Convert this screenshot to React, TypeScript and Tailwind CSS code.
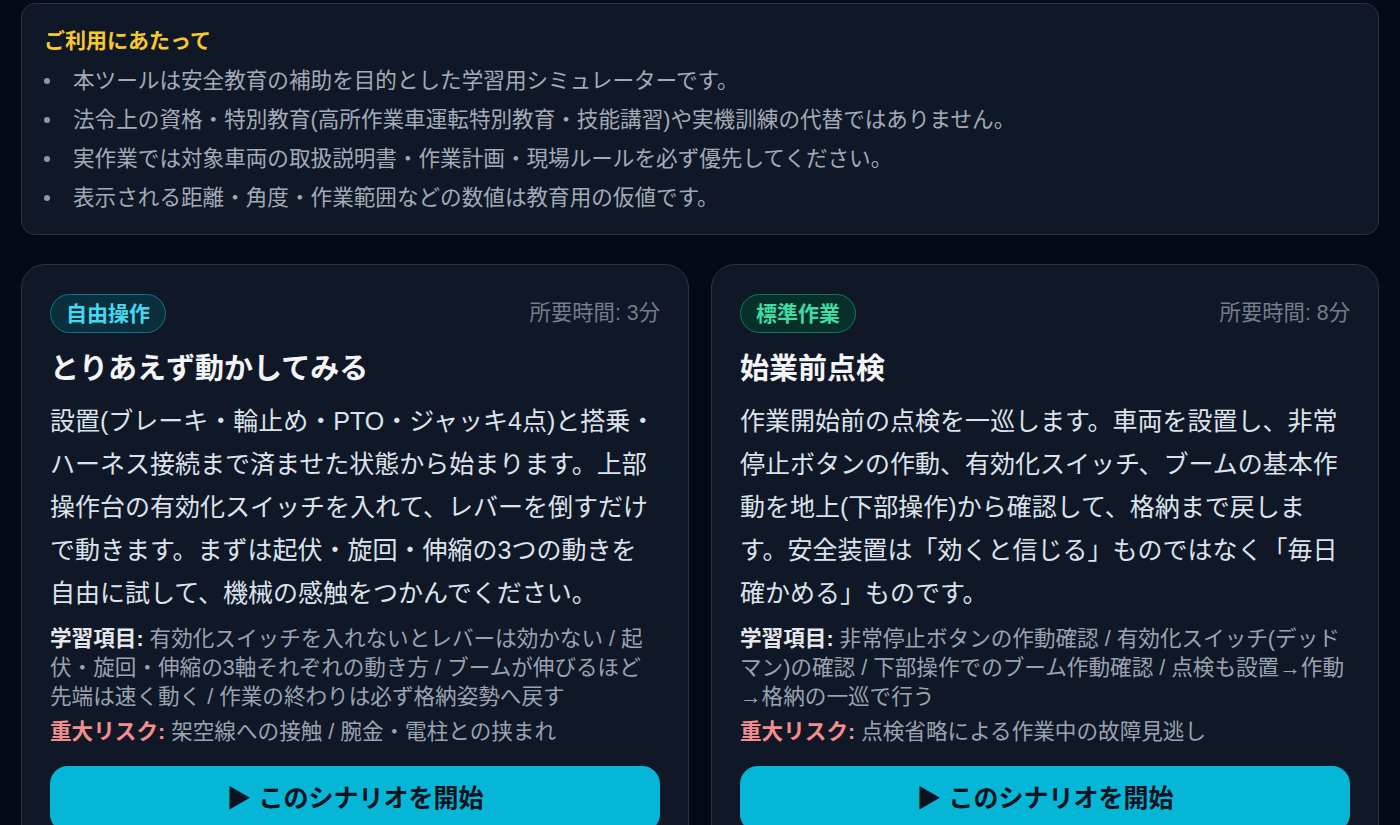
import React from "react"

// ─── Data ────────────────────────────────────────────────────────────────────

const NOTICES = [
  "本ツールは安全教育の補助を目的とした学習用シミュレーターです。",
  "法令上の資格・特別教育(高所作業車運転特別教育・技能講習)や実機訓練の代替ではありません。",
  "実作業では対象車両の取扱説明書・作業計画・現場ルールを必ず優先してください。",
  "表示される距離・角度・作業範囲などの数値は教育用の仮値です。",
]

type Scenario = {
  tag: string
  tone: "cyan" | "green"
  minutes: number
  title: string
  desc: string
  learn: string
  risk: string
}

const SCENARIOS: Scenario[] = [
  {
    tag: "自由操作",
    tone: "cyan",
    minutes: 3,
    title: "とりあえず動かしてみる",
    desc: "設置(ブレーキ・輪止め・PTO・ジャッキ4点)と搭乗・ハーネス接続まで済ませた状態から始まります。上部操作台の有効化スイッチを入れて、レバーを倒すだけで動きます。まずは起伏・旋回・伸縮の3つの動きを自由に試して、機械の感触をつかんでください。",
    learn:
      "有効化スイッチを入れないとレバーは効かない / 起伏・旋回・伸縮の3軸それぞれの動き方 / ブームが伸びるほど先端は速く動く / 作業の終わりは必ず格納姿勢へ戻す",
    risk: "架空線への接触 / 腕金・電柱との挟まれ",
  },
  {
    tag: "標準作業",
    tone: "green",
    minutes: 8,
    title: "始業前点検",
    desc: "作業開始前の点検を一巡します。車両を設置し、非常停止ボタンの作動、有効化スイッチ、ブームの基本作動を地上(下部操作)から確認して、格納まで戻します。安全装置は「効くと信じる」ものではなく「毎日確かめる」ものです。",
    learn:
      "非常停止ボタンの作動確認 / 有効化スイッチ(デッドマン)の確認 / 下部操作でのブーム作動確認 / 点検も設置→作動→格納の一巡で行う",
    risk: "点検省略による作業中の故障見逃し",
  },
]

const TAG_STYLES = {
  cyan: "border-[#0e7490] bg-[#0b2f3d] text-[#45d8f0]",
  green: "border-[#0b7a5a] bg-[#08302b] text-[#3fdca4]",
}

// ─── Card ────────────────────────────────────────────────────────────────────

function ScenarioCard({ s }: { s: Scenario }) {
  return (
    <div className="bg-[#101827] border border-[#2a3342] rounded-[24px] px-[28px] pt-[29px] pb-[28px]">
      <div className="flex items-center justify-between h-[39px]">
        <span
          className={`h-[39px] flex items-center px-[15px] rounded-full border text-[21px] font-bold ${TAG_STYLES[s.tone]}`}
        >
          {s.tag}
        </span>
        <span className="text-[21.33px] text-[#737d8c]">所要時間: {s.minutes}分</span>
      </div>
      <h2 className="mt-[18px] text-[29px] leading-[36px] font-bold text-[#f3f4f6]">{s.title}</h2>
      <p className="mt-[13px] text-[25px] leading-[43px] text-[#dde3ec]">{s.desc}</p>
      <p className="mt-[9px] text-[21.6px] leading-[29px] text-[#9aa3b1]">
        <span className="font-bold text-[#e5e7eb]">学習項目:</span> {s.learn}
      </p>
      <p className="mt-[6px] text-[21.6px] leading-[29px] text-[#9aa3b1]">
        <span className="font-bold text-[#f48e8e]">重大リスク:</span> {s.risk}
      </p>
      <button className="mt-[20px] w-full h-[66px] rounded-[18px] bg-[#06b6d6] text-[#0b1220] text-[25px] font-bold">
        ▶ このシナリオを開始
      </button>
    </div>
  )
}

// ─── Page ────────────────────────────────────────────────────────────────────

export default function App() {
  return (
    <div
      className="min-h-screen bg-[#050a16] px-[21px] pt-[3px] pb-10"
      style={{ fontFamily: '"Liberation Sans", "Noto Sans CJK JP", sans-serif' }}
    >
      {/* Notice */}
      <div className="bg-[#101827] border border-[#2a3342] rounded-[14px] pl-[22px] pr-6 pt-[24px] pb-[17px]">
        <h3 className="text-[21px] leading-[26px] font-bold text-[#f7c92f]">ご利用にあたって</h3>
        <ul className="mt-[7px]">
          {NOTICES.map(n => (
            <li key={n} className="flex items-center text-[21.6px] leading-[39px] text-[#a3abb8]">
              <span className="w-[6px] h-[6px] rounded-full bg-[#8e97a5] shrink-0 mr-[23px]" />
              {n}
            </li>
          ))}
        </ul>
      </div>

      {/* Scenarios */}
      <div className="mt-[29px] grid grid-cols-2 gap-[22px]">
        {SCENARIOS.map(s => (
          <ScenarioCard key={s.title} s={s} />
        ))}
      </div>
    </div>
  )
}
